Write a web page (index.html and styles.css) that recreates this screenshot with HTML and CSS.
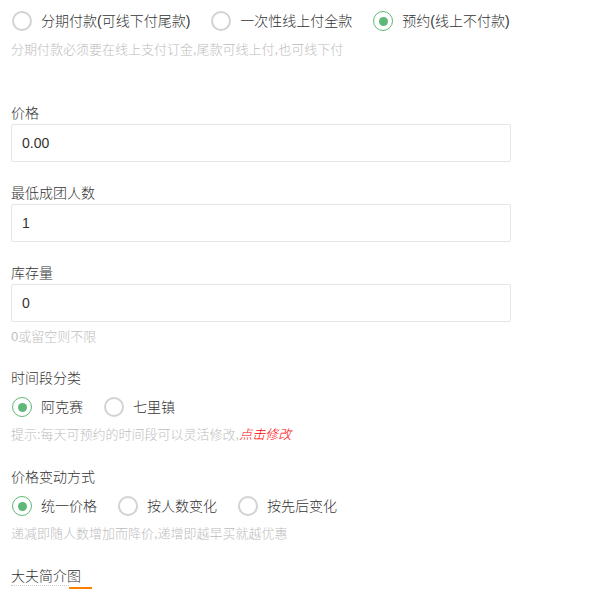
FILE: index.html
```html
<!DOCTYPE html>
<html lang="zh-CN">
<head>
    <meta charset="UTF-8">
    <meta name="viewport" content="width=device-width, initial-scale=1.0">
    <title>预约设置</title>
    <link rel="stylesheet" href="styles.css">
</head>
<body>
    <div class="form">
        <div class="radio-group">
            <label class="radio"><i></i>分期付款(可线下付尾款)</label>
            <label class="radio"><i></i>一次性线上付全款</label>
            <label class="radio checked"><i></i>预约(线上不付款)</label>
        </div>
        <div class="hint hint-top">分期付款必须要在线上支付订金,尾款可线上付,也可线下付</div>

        <div class="field first">
            <div class="label">价格</div>
            <input class="input" type="text" value="0.00">
        </div>

        <div class="field">
            <div class="label">最低成团人数</div>
            <input class="input" type="text" value="1">
        </div>

        <div class="field last">
            <div class="label">库存量</div>
            <input class="input" type="text" value="0">
            <div class="hint hint-input">0或留空则不限</div>
        </div>

        <div class="group">
            <div class="label">时间段分类</div>
            <div class="radio-group">
                <label class="radio checked"><i></i>阿克赛</label>
                <label class="radio"><i></i>七里镇</label>
            </div>
            <div class="hint">提示:每天可预约的时间段可以灵活修改,<a class="edit-link" href="#">点击修改</a></div>
        </div>

        <div class="group">
            <div class="label">价格变动方式</div>
            <div class="radio-group">
                <label class="radio checked"><i></i>统一价格</label>
                <label class="radio"><i></i>按人数变化</label>
                <label class="radio"><i></i>按先后变化</label>
            </div>
            <div class="hint">递减即随人数增加而降价,递增即越早买就越优惠</div>
        </div>

        <div class="group">
            <div class="label label-tab">大夫简介图</div>
            <div class="tab-line">
                <span class="tab-dots"></span>
                <span class="tab-active"></span>
            </div>
        </div>
    </div>
</body>
</html>
```

FILE: styles.css
```css
* {
    margin: 0;
    padding: 0;
    box-sizing: border-box;
}

body {
    background: #fff;
    color: #333;
    font-family: 'Liberation Sans', 'Noto Sans CJK SC', sans-serif;
    font-size: 14px;
    font-weight: 300;
    overflow: hidden;
}

.form {
    padding: 11px 11px 0;
}

.radio-group {
    display: flex;
    align-items: center;
    height: 20px;
    gap: 20px;
}

.radio {
    display: flex;
    align-items: center;
    gap: 9px;
    font-size: 14px;
    line-height: 20px;
    color: #333;
    cursor: pointer;
}

.radio i {
    width: 20px;
    height: 20px;
    border: 2px solid #d2d2d2;
    border-radius: 50%;
    display: flex;
    align-items: center;
    justify-content: center;
    margin-left: 1px;
}

.radio.checked i {
    border: 1.5px solid #5fb878;
}

.radio.checked i::after {
    content: '';
    width: 9px;
    height: 9px;
    border-radius: 50%;
    background: #5fb878;
}

.hint {
    font-size: 13px;
    line-height: 20px;
    color: #bdbdbd;
    margin-top: 8px;
}

.hint-top {
    margin-top: 9px;
}

.hint-input {
    margin-top: 5px;
}

.edit-link {
    color: #f00;
    font-style: italic;
    text-decoration: none;
}

.label {
    font-size: 14px;
    line-height: 20px;
    color: #333;
    margin-bottom: 1px;
}

.field {
    margin-bottom: 21px;
}

.field.first {
    margin-top: 43px;
}

.field.last {
    margin-bottom: 0;
}

.input {
    display: block;
    width: 500px;
    height: 38px;
    padding: 0 10px;
    border: 1px solid #e6e6e6;
    border-radius: 2px;
    background: #fff;
    font-family: inherit;
    font-size: 14px;
    font-weight: 300;
    color: #333;
    outline: none;
}

.group {
    margin-top: 21px;
}

.group + .group {
    margin-top: 22px;
}

.group .radio-group {
    margin-top: 9px;
}

.label-tab {
    height: 19px;
    margin-bottom: 0;
}

.tab-line {
    display: flex;
    align-items: flex-start;
}

.tab-dots {
    width: 58px;
    border-top: 1px dotted #c8c8c8;
}

.tab-active {
    width: 23px;
    height: 2px;
    margin-top: 2px;
    background: #ff8000;
}
```
